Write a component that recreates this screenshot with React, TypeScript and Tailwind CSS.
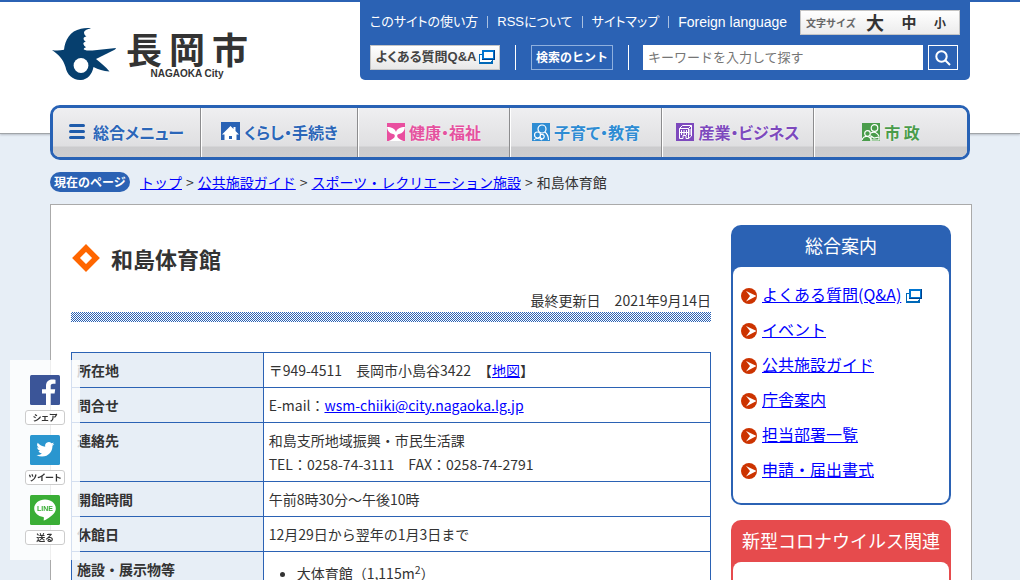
import type { ReactNode } from "react";

function WindowIcon() {
  return (
    <svg width="16" height="14" viewBox="0 0 16 14" className="shrink-0" aria-hidden="true">
      <path d="M0 4h3v9H0zM0 11h13v3H0zM13 9h1v5h-1z" fill="#0068b7" />
      <rect x="1" y="5" width="11" height="7" fill="#fff" />
      <rect x="3" y="0" width="13" height="10" fill="#003f8a" />
      <rect x="3" y="0" width="12" height="9" fill="#0075d1" />
      <rect x="5" y="2" width="9" height="6" fill="#fff" />
    </svg>
  );
}

function CityMark() {
  return (
    <svg width="64" height="52" viewBox="0 0 64 52" aria-hidden="true">
      <path
        fill="#063f6e"
        d="M0 22c4 .8 8 .6 12-.2C13 12 18 3 29 .8c3-.6 7-1 10-.4-4 .6-6 1.800-7 3.600 0 2 .6 3.200 2.400 4.600-2 .2-3 1-2.800 2.400.2 1.200 1 2 2.200 2.400-1.800.6-2.600 1.400-2.400 2.400.2 1.600 1.200 2.600 2.800 3.400-1.600.4-2.600 1.200-2.400 2.200 3 1.400 7 1.400 11 .8L64 20c-.2.800-.6 1.400-1.400 1.800L44 31c5 4 9.500 7.500 13.500 12.600-6.500-.6-11-2-16-4.600C40 46.500 35.500 51.600 29 52c-8 .2-14-5-15.500-13C11 31 6.500 26.500 0 22z"
      />
      <circle cx="29" cy="37.500" r="7.400" fill="#fff" />
    </svg>
  );
}

function MenuIcon() {
  return (
    <svg width="16" height="17" viewBox="0 0 16 17" aria-hidden="true">
      <path d="M1.500 2.500h13M1.500 8.500h13M1.500 14.500h13" stroke="#1f5cab" strokeWidth="3" strokeLinecap="round" />
    </svg>
  );
}

function HouseIcon() {
  return (
    <svg width="19" height="19" viewBox="0 0 19 19" aria-hidden="true">
      <rect width="19" height="18" fill="#2862b5" />
      <path d="M9.500 4L1 12.500h2.500V18h12v-5.500H18L14.500 9V5h-2v2z" fill="#fff" />
      <rect x="8" y="14" width="3" height="3" fill="#2862b5" />
    </svg>
  );
}

function SproutIcon() {
  return (
    <svg width="18" height="18" viewBox="0 0 18 18" aria-hidden="true">
      <rect width="18" height="18" fill="#e94f9f" />
      <path d="M0 4c4.500 0 8 1.800 9 5 1-3.200 4.500-5 9-5-.4 4-2.500 6.500-6 7-1.300.2-2 1-1.800 2.200.4 2 2.800 3.300 6.300 4.800h-15c3.500-1.500 5.900-2.800 6.300-4.800C8 12 7.300 11.200 6 11 2.500 10.500.4 8 0 4z" fill="#fff" />
    </svg>
  );
}

function ChildIcon() {
  return (
    <svg width="18" height="18" viewBox="0 0 18 18" fill="none" stroke="#fff" strokeWidth="1.200" aria-hidden="true">
      <rect width="18" height="18" fill="#2e8cd3" stroke="none" />
      <circle cx="10" cy="6" r="4" />
      <circle cx="5.500" cy="12" r="3" />
      <path d="M13 9c2.500 2 3.500 5 3.500 8M8 14c1 2 3 2.500 4 .5s-1-3.500-3-3M2 17c1-2 5-2 8 0" />
    </svg>
  );
}

function BuildingIcon() {
  return (
    <svg width="18" height="18" viewBox="0 0 18 18" fill="none" stroke="#fff" strokeWidth="1" aria-hidden="true">
      <rect width="18" height="18" fill="#7d49bd" stroke="none" />
      <path d="M3.500 5.500h9v10h-2.500v-3h-3v3H3.500zM3.500 5.500l3-3h9v10.500l-3 2.500M12.500 5.500l3-3M5.500 7v5M8 7v5M10.500 7v5M3.500 9.500h9M14 6v6" />
    </svg>
  );
}

function PeopleIcon() {
  return (
    <svg width="18" height="18" viewBox="0 0 18 18" fill="none" stroke="#fff" strokeWidth="1.200" aria-hidden="true">
      <rect width="18" height="18" fill="#4a9c4b" stroke="none" />
      <circle cx="12.500" cy="5" r="3.300" />
      <circle cx="5.500" cy="10.500" r="2.800" />
      <path d="M0 17c1-3 3-4 5.500-3.500S9 16 9 18M9 10c3-2 6-.5 8 3M9 13l3 2 5-1v3H9z" />
    </svg>
  );
}

function ArrowBadge() {
  return (
    <svg width="16" height="16" viewBox="0 0 16 16" className="shrink-0" aria-hidden="true">
      <circle cx="8" cy="8" r="8" fill="#cc3300" />
      <path d="M5 3L15.500 8 5 13.500 9 8z" fill="#fff" />
    </svg>
  );
}

function FacebookIcon() {
  return (
    <svg width="30" height="30" viewBox="0 0 30 30" aria-hidden="true">
      <rect width="30" height="30" rx="1.500" fill="#3b5598" />
      <path d="M16 30V18.500h-4v-4.300h4v-3.300c0-4 2.500-6.300 6.200-6.300 1.600 0 2.800.1 3.300.2v4h-2.400c-1.900 0-2.400.9-2.400 2.300v3.100h4.500l-.6 4.300h-3.900V30z" fill="#fff" />
    </svg>
  );
}

function TwitterIcon() {
  return (
    <svg width="30" height="30" viewBox="0 0 30 30" aria-hidden="true">
      <rect width="30" height="30" rx="1.500" fill="#2a96cf" />
      <path
        transform="translate(6.500 5.500) scale(.74)"
        d="M23.950 4.570a10 10 0 0 1-2.820.77 4.960 4.960 0 0 0 2.160-2.720c-.95.55-2 .95-3.130 1.180a4.920 4.920 0 0 0-8.380 4.480C7.690 8.100 4.070 6.130 1.640 3.160a4.920 4.920 0 0 0 1.520 6.570 4.900 4.900 0 0 1-2.230-.61v.06c0 2.380 1.700 4.370 3.950 4.820a5 5 0 0 1-2.210.09 4.940 4.940 0 0 0 4.600 3.420A9.870 9.870 0 0 1 0 19.540a14 14 0 0 0 7.550 2.210c9.050 0 14-7.500 14-13.980 0-.21 0-.42-.02-.63a9.940 9.940 0 0 0 2.420-2.570z"
        fill="#fff"
      />
    </svg>
  );
}

function LineIcon() {
  return (
    <svg width="30" height="30" viewBox="0 0 30 30" aria-hidden="true">
      <rect width="30" height="30" rx="1.500" fill="#3aae36" />
      <path d="M15 4.500c6 0 10.800 4 10.800 8.900 0 2-.8 3.800-2.400 5.500-2.300 2.700-7.500 5.900-8.700 6.400-1.200.5-1-.3-1-.6l.2-1.600c0-.4.100-1-.7-1.200C7.900 21.100 4.200 17.600 4.200 13.400 4.200 8.500 9 4.500 15 4.500z" fill="#fff" />
      <text x="15" y="16" textAnchor="middle" fontFamily="Liberation Sans" fontWeight="bold" fontSize="7" fill="#3aae36">
        LINE
      </text>
    </svg>
  );
}

const utilityLinks = ["このサイトの使い方", "RSSについて", "サイトマップ", "Foreign language"];

const navItems: { label: string; icon: ReactNode; look: string }[] = [
  { label: "総合メニュー", icon: <MenuIcon />, look: "gap-2 text-[#2b66b8]" },
  { label: "くらし・手続き", icon: <HouseIcon />, look: "gap-1 text-[#2b66b8]" },
  { label: "健康・福祉", icon: <SproutIcon />, look: "gap-1 text-[#e5529f]" },
  { label: "子育て・教育", icon: <ChildIcon />, look: "gap-1 text-[#2e8cd3]" },
  { label: "産業・ビジネス", icon: <BuildingIcon />, look: "gap-1 text-[#7d49bd]" },
  { label: "市 政", icon: <PeopleIcon />, look: "gap-1 text-[#4a9c4b]" },
];

const crumbs = ["トップ", "公共施設ガイド", "スポーツ・レクリエーション施設"];

const rows: { head: string; body: ReactNode }[] = [
  {
    head: "所在地",
    body: (
      <>
        〒949-4511　長岡市小島谷3422　【<a href="#map" className="text-[#0000ff] underline">地図</a>】
      </>
    ),
  },
  {
    head: "問合せ",
    body: (
      <>
        E-mail：
        <a href="mailto:wsm-chiiki@city.nagaoka.lg.jp" className="text-[#0000ff] underline">
          wsm-chiiki@city.nagaoka.lg.jp
        </a>
      </>
    ),
  },
  {
    head: "連絡先",
    body: (
      <>
        和島支所地域振興・市民生活課
        <br />
        TEL：0258-74-3111　FAX：0258-74-2791
      </>
    ),
  },
  { head: "開館時間", body: "午前8時30分～午後10時" },
  { head: "休館日", body: "12月29日から翌年の1月3日まで" },
  {
    head: "施設・展示物等",
    body: (
      <ul className="list-disc pt-1 pl-7">
        <li>
          大体育館（1,115m<sup>2</sup>）
        </li>
      </ul>
    ),
  },
];

const guideLinks = ["よくある質問(Q&A)", "イベント", "公共施設ガイド", "庁舎案内", "担当部署一覧", "申請・届出書式"];

const shares: { label: string; icon: ReactNode }[] = [
  { label: "シェア", icon: <FacebookIcon /> },
  { label: "ツイート", icon: <TwitterIcon /> },
  { label: "送る", icon: <LineIcon /> },
];

function Header() {
  return (
    <header className="h-[134px] border-t-2 border-b border-t-[#2b62b4] border-b-[#a0a4a8] bg-white shadow-[0_1px_2px_#b8bec6]">
      <div className="mx-auto flex max-w-[920px] items-start justify-between">
        <a href="#top" className="flex pt-[26px] pl-0.5 text-[#333]">
          <CityMark />
          <span className="flex flex-col items-center pl-2.5">
            <span className="flex gap-[7px] text-[36px] leading-10 font-bold">
              <span>長</span>
              <span>岡</span>
              <span>市</span>
            </span>
            <span className="font-['Liberation_Sans',sans-serif] text-[10px] leading-3 font-bold">NAGAOKA City</span>
          </span>
        </a>
        <div className="-mt-0.5 flex h-20 w-[610px] flex-col gap-2.5 rounded-b-[5px] bg-[#2b62b4] px-2.5 pt-2.5">
          <div className="flex h-[25px] items-center justify-between">
            <ul className="flex items-center pb-0.5 font-['Liberation_Sans','Noto_Sans_CJK_JP',sans-serif] text-[13px] leading-5 text-white [font-feature-settings:'palt']">
              {utilityLinks.map((label, i) => (
                <li key={label} className="flex items-center whitespace-nowrap">
                  {i > 0 && <span className="mx-[9px] h-3 w-px bg-[#a9c0e0]" />}
                  <a href="#utility" className={i === 3 ? "text-sm" : ""}>{label}</a>
                </li>
              ))}
            </ul>
            <div className="flex h-[25px] w-40 items-center border border-[#c5c5c5] bg-linear-to-b from-white to-[#ececec] pl-[5px] font-bold text-[#333]">
              <span className="w-[50px] shrink-0 text-[10px] whitespace-nowrap text-[#666]">文字サイズ</span>
              <button type="button" className="w-[38px] pb-0.5 text-[18px] leading-5">大</button>
              <button type="button" className="w-[30px] pb-0.5 text-[15px] leading-5">中</button>
              <button type="button" className="w-8 text-xs leading-5">小</button>
            </div>
          </div>
          <form className="flex h-[25px] items-center" onSubmit={(e) => e.preventDefault()}>
            <a
              href="#faq"
              className="flex h-[25px] w-[130px] items-center justify-center gap-0.5 border border-[#c5c5c5] bg-linear-to-b from-white to-[#e8e8e8] pb-0.5 font-['Liberation_Sans','Noto_Sans_CJK_JP',sans-serif] text-[13px] font-bold whitespace-nowrap text-[#444] [font-feature-settings:'palt']"
            >
              よくある質問Q&amp;A
              <WindowIcon />
            </a>
            <span className="ml-[15px] h-[25px] w-px bg-white" />
            <a href="#hint" className="ml-[15px] flex h-[25px] w-[82px] items-center justify-center border border-[#8fb0de] pb-0.5 text-xs font-bold text-white">
              検索のヒント
            </a>
            <span className="ml-[15px] h-[25px] w-px bg-white" />
            <input
              type="text"
              aria-label="検索キーワード"
              placeholder="キーワードを入力して探す"
              className="ml-3.5 h-[25px] min-w-0 flex-1 bg-white px-[5px] pb-0.5 text-[13px] text-[#333] outline-none placeholder:text-[#757575]"
            />
            <button type="submit" aria-label="検索" className="mr-0.5 ml-[5px] flex h-[25px] w-[30px] items-center justify-center border border-white">
              <svg width="16" height="16" viewBox="0 0 16 16" fill="none" stroke="#fff" strokeWidth="2" aria-hidden="true">
                <circle cx="6.500" cy="6.500" r="5.200" />
                <path d="M10.500 10.500L15 15" />
              </svg>
            </button>
          </form>
        </div>
      </div>
    </header>
  );
}

function PanelBox({ title, tone, children }: { title: string; tone: string; children: ReactNode }) {
  return (
    <section className={"rounded-[10px] p-0.5 pt-0 " + tone}>
      <h2 className="pb-0.5 text-center text-[18px] leading-10 text-white">{title}</h2>
      <div className="rounded-lg bg-white">{children}</div>
    </section>
  );
}

export default function App() {
  return (
    <div className="min-h-screen bg-[#e7eef6] font-['Noto_Sans_CJK_JP',sans-serif] text-sm leading-6 text-[#333]">
      <Header />
      <div className="relative mx-auto -mt-[29px] max-w-[920px]">
        <nav className="grid h-[55px] grid-cols-[148fr_157fr_152fr_152fr_152fr_153fr] overflow-hidden rounded-[10px] border-3 border-[#2862b5] bg-white">
          {navItems.map((item) => (
            <a
              key={item.label}
              href="#nav"
              className={
                "flex items-center justify-center border-r border-l border-r-[#8c8c8e] border-l-white bg-[linear-gradient(#efeff1,#dfdfe1_38px,#cbcbcd_39px,#cdcdcf)] pb-0.5 text-base font-bold whitespace-nowrap [font-feature-settings:'palt'] first:border-l-0 last:border-r-0 [text-shadow:0_0_2px_#fff] " +
                item.look
              }
            >
              {item.icon}
              {item.label}
            </a>
          ))}
        </nav>

        <div className="mt-3 flex h-5 items-center">
          <span className="flex h-5 w-20 items-center justify-center rounded-full bg-[#2b62b4] text-xs font-bold text-white">
            現在のページ
          </span>
          <ol className="ml-2.5 flex">
            {crumbs.map((label) => (
              <li key={label} className="flex">
                <a href="#crumb" className="text-[#0000ff] underline">{label}</a>
                <span className="px-1">&gt;</span>
              </li>
            ))}
            <li>和島体育館</li>
          </ol>
        </div>

        <div className="mt-3 -mr-0.5 flex gap-5 border border-[#aaa] bg-white p-5">
          <main className="min-w-0 flex-1">
            <div className="flex items-center gap-2.5 pt-[15px]">
              <svg width="30" height="30" viewBox="0 0 30 30" aria-hidden="true">
                <path d="M15 5L25 15 15 25 5 15z" fill="none" stroke="#ff6600" strokeWidth="5.500" />
              </svg>
              <h1 className="text-[22px] leading-9 font-bold">和島体育館</h1>
            </div>
            <p className="mt-3 text-right">最終更新日　2021年9月14日</p>
            <div className="h-2.5 bg-[repeating-conic-gradient(#2b62b4_0_25%,#fff_0_50%)] bg-[length:2px_2px]" />
            <table className="mt-[30px] w-full border-collapse">
              <tbody>
                {rows.map((row) => (
                  <tr key={row.head}>
                    <th scope="row" className="w-[30%] border border-[#2b62b4] bg-[#e7eef6] px-[5px] py-[5px] text-left align-top font-bold">
                      {row.head}
                    </th>
                    <td className="border border-[#2b62b4] px-[5px] py-[5px]">{row.body}</td>
                  </tr>
                ))}
              </tbody>
            </table>
          </main>

          <aside className="flex w-[220px] shrink-0 flex-col gap-[15px]">
            <PanelBox title="総合案内" tone="bg-[#2b62b4]">
              <ul className="px-2 pt-[11px] pb-[15px] text-base">
                {guideLinks.map((label, i) => (
                  <li key={label} className="flex h-[35px] items-center gap-[5px]">
                    <ArrowBadge />
                    <a href="#guide" className="pb-[3px] text-[#0000ff] underline">{label}</a>
                    {i === 0 && <WindowIcon />}
                  </li>
                ))}
              </ul>
            </PanelBox>
            <PanelBox title="新型コロナウイルス関連" tone="bg-[#e64b4d]">
              <div className="h-20" />
            </PanelBox>
          </aside>
        </div>
      </div>

      <div className="fixed top-[360px] left-2.5 flex h-[200px] w-[70px] flex-col items-center gap-2.5 bg-white/80 pt-[15px]">
        {shares.map((item) => (
          <a key={item.label} href="#share" className="flex flex-col items-center gap-[5px]">
            {item.icon}
            <span className="flex h-[15px] w-10 items-center justify-center rounded-[3px] border border-[#ccc] bg-white text-[9px] font-bold whitespace-nowrap [font-feature-settings:'palt']">
              {item.label}
            </span>
          </a>
        ))}
      </div>
    </div>
  );
}
